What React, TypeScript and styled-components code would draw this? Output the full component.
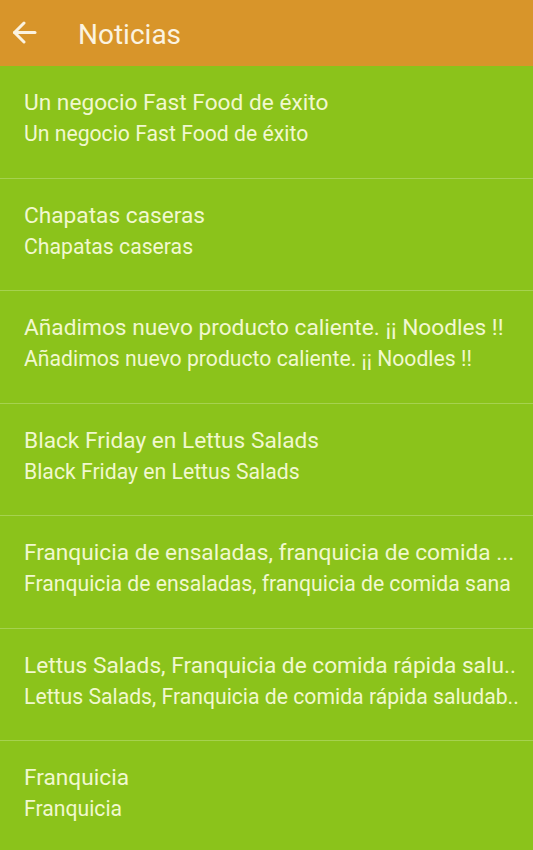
import React from "react";
import styled, { createGlobalStyle } from "styled-components";

const Global = createGlobalStyle`
  html, body { margin: 0; padding: 0; background: #8bc31b; }
  body { font-family: Roboto, "Noto Sans", sans-serif; }
`;

const Page = styled.div`
  width: 533px;
  height: 850px;
  overflow: hidden;
  background: #8bc31b;
  display: flex;
  flex-direction: column;
`;

const Toolbar = styled.header`
  height: 66px;
  flex: 0 0 66px;
  background: #d8952a;
  display: flex;
  align-items: flex-start;
  box-sizing: border-box;
  padding-left: 12px;
`;

const BackButton = styled.div`
  width: 25px;
  height: 23px;
  margin-top: 21px;
  margin-right: 41px;
  display: flex;
`;

const Title = styled.h1`
  margin: 18.7px 0 0 0;
  font-size: 28px;
  line-height: 32px;
  font-weight: 400;
  color: #fbf3e0;
`;

const List = styled.ul`
  list-style: none;
  margin: 0;
  padding: 0;
`;

const Row = styled.li`
  height: 112.5px;
  box-sizing: border-box;
  border-bottom: 1.5px solid #a6d24f;
  padding: 23.3px 12px 0 24px;
  display: flex;
  flex-direction: column;
`;

const ItemTitle = styled.div`
  font-size: 22.7px;
  color: #f1f8cf;
  line-height: 28px;
  white-space: nowrap;
  overflow: hidden;
`;

const ItemSub = styled.div`
  font-size: 21.2px;
  color: #f1f8cf;
  line-height: 26px;
  margin-top: 4.2px;
  white-space: nowrap;
  overflow: hidden;
`;

const items: [string, string][] = [
  ["Un negocio Fast Food de éxito", "Un negocio Fast Food de éxito"],
  ["Chapatas caseras", "Chapatas caseras"],
  ["Añadimos nuevo producto caliente. ¡¡ Noodles !!", "Añadimos nuevo producto caliente. ¡¡ Noodles !!"],
  ["Black Friday en Lettus Salads", "Black Friday en Lettus Salads"],
  ["Franquicia de ensaladas, franquicia de comida ...", "Franquicia de ensaladas, franquicia de comida sana"],
  ["Lettus Salads, Franquicia de comida rápida salu..", "Lettus Salads, Franquicia de comida rápida saludab.."],
  ["Franquicia", "Franquicia"],
];

export default function App() {
  return (
    <>
      <Global />
      <Page>
        <Toolbar>
          <BackButton>
            <svg width="25" height="23" viewBox="0 0 25 23" fill="none" stroke="#fbf3e0" strokeWidth="3" strokeLinecap="round" strokeLinejoin="round">
              <path d="M2.5 11.5H23" />
              <path d="M12 2L2.5 11.5L12 21" />
            </svg>
          </BackButton>
          <Title>Noticias</Title>
        </Toolbar>
        <List>
          {items.map(([t, s], i) => (
            <Row key={i}>
              <ItemTitle>{t}</ItemTitle>
              <ItemSub>{s}</ItemSub>
            </Row>
          ))}
        </List>
      </Page>
    </>
  );
}
